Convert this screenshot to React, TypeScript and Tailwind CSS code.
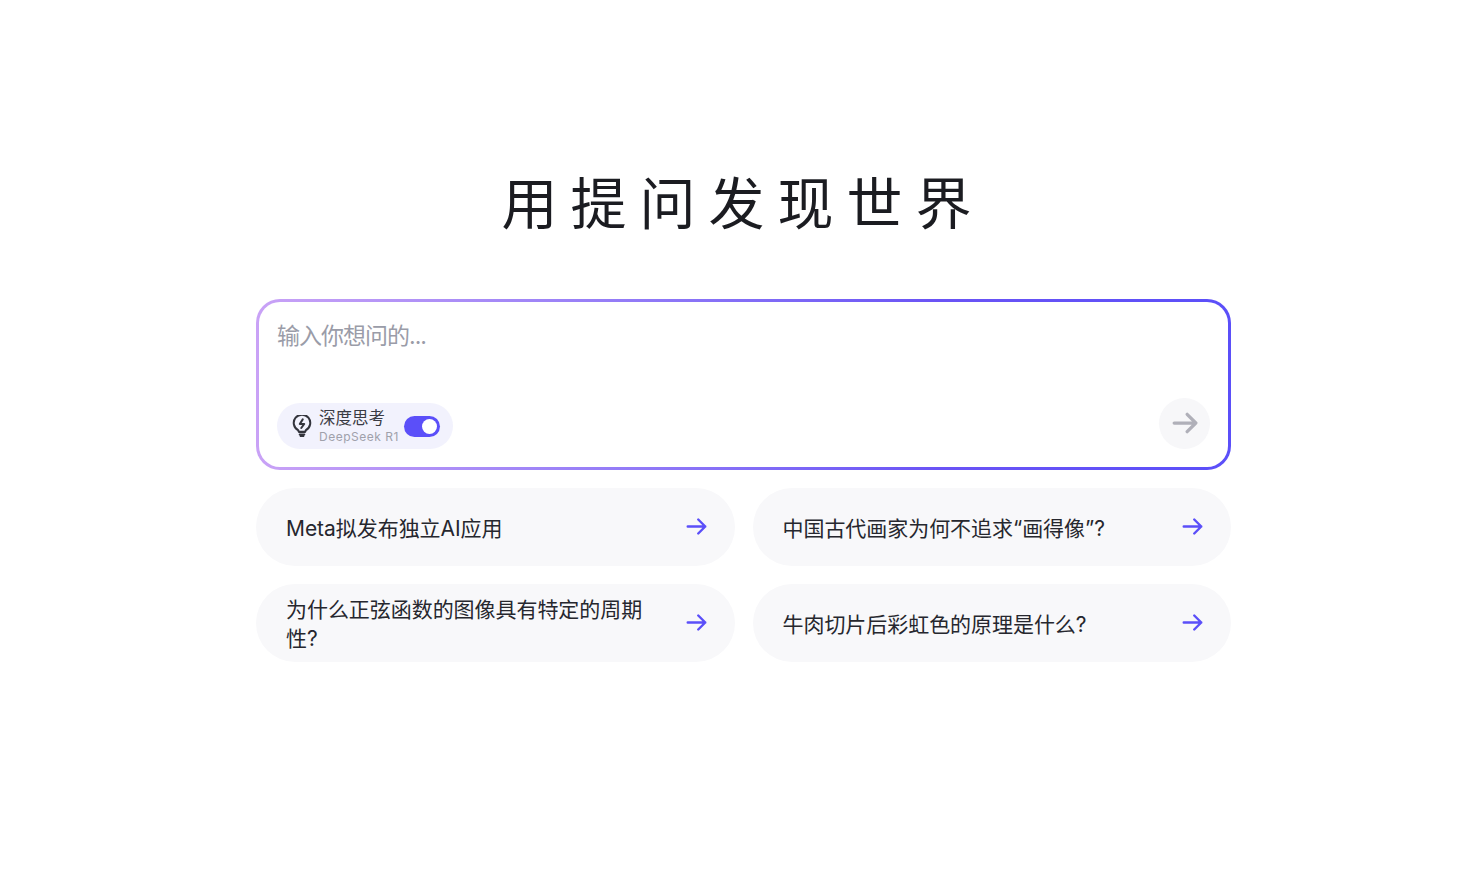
const font = "font-['Inter','Noto_Sans_CJK_SC',sans-serif]";

const questions = [
  "Meta拟发布独立AI应用",
  "中国古代画家为何不追求“画得像”?",
  "为什么正弦函数的图像具有特定的周期性?",
  "牛肉切片后彩虹色的原理是什么?",
];

const Arrow = ({ className, width = 2.8 }: { className: string; width?: number }) => (
  <svg viewBox="0 0 24 24" fill="none" stroke="currentColor" strokeLinecap="round" strokeLinejoin="round" className={className}>
    <path d="M2 12h20M14 4l8 8-8 8" strokeWidth={width} />
  </svg>
);

const Bulb = () => (
  <svg viewBox="0 0 24 24" fill="none" stroke="#33343c" strokeWidth="2.2" strokeLinecap="round" strokeLinejoin="round" className="w-[22px] h-[22px] shrink-0">
    <path d="M8.6 18.4 7.8 16.6a9 9 0 1 1 8.4 0l-.8 1.8z" />
    <path d="M12.8 4.8 9.6 9.8h4.8l-3.2 4.4" />
    <path d="M9.5 21.2h5M10.5 23h3" />
  </svg>
);

const App = () => {
  return (
    <div className={`min-h-[881px] bg-white pt-[166px] pl-[256px] ${font}`}>
      <div className="w-[975px]">
        <h1 className="text-[56px] leading-[76px] font-normal tracking-[13px] text-[#1b1c21] text-center pr-[1px]">
          用提问发现世界
        </h1>
        <div className="mt-[57px] p-[3px] h-[171px] rounded-[24px] bg-gradient-to-r from-[#c9a2f6] via-[#6a53f5] via-70% to-[#5b4ff9]">
          <div className="h-full rounded-[21px] bg-white pl-[18px] pr-[18px] flex flex-col justify-between pb-[18px]">
            <div className="pt-[18px] text-[23px] leading-[32px] tracking-[-1px] text-[#9a9ca8]">输入你想问的...</div>
            <div className="flex items-end justify-between">
              <div className="w-[176px] h-[46px] rounded-full bg-[#f2f2fd] flex items-center pl-[14px]">
                <Bulb />
                <div className="ml-[6px] flex flex-col translate-y-[1px]">
                  <span className="text-[16.5px] leading-[19px] text-[#3a3b44]">深度思考</span>
                  <span className="text-[12px] leading-[17px] tracking-[0.5px] text-[#a0a1ab]">DeepSeek R1</span>
                </div>
                <div className="ml-[5px] w-[36px] h-[21px] rounded-full bg-[#5b4ff9] flex items-center justify-end pr-[3px]">
                  <div className="w-[15px] h-[15px] rounded-full bg-white" />
                </div>
              </div>
              <button className="w-[51px] h-[51px] rounded-full bg-[#f7f7f9] flex items-center justify-center">
                <Arrow className="w-[26px] h-[26px] text-[#b0b0b9] -translate-y-[1px]" width={3} />
              </button>
            </div>
          </div>
        </div>
        <div className="mt-[18px] grid grid-cols-2 gap-[18px]">
          {questions.map((q) => (
            <div key={q} className="h-[78px] rounded-[39px] bg-[#f8f8fa] flex items-center justify-between pl-[30px] pr-[28px]">
              <span className="w-[360px] translate-y-[1px] text-[21px] leading-[29px] tracking-[-0.05px] text-[#26272e]">{q}</span>
              <Arrow className="w-[21px] h-[21px] text-[#5b4ff9] -translate-y-[1px]" />
            </div>
          ))}
        </div>
      </div>
    </div>
  );
};

export default App;
